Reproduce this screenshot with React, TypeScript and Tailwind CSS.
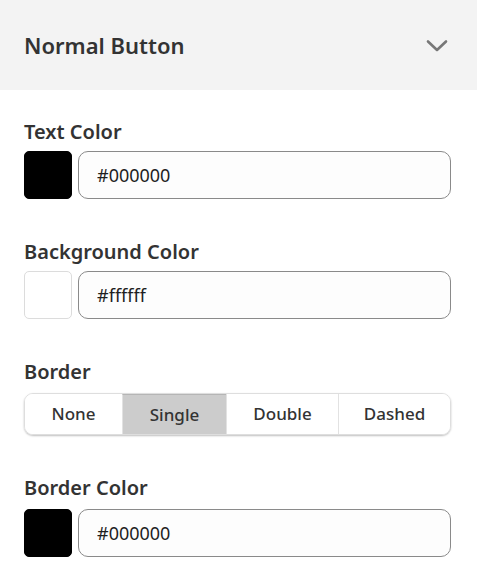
import { useState } from 'react';

const font = { fontFamily: '"Noto Sans", "Open Sans", sans-serif' };

function ColorField({ label, value, swatch, gap = 6 }: { label: string; value: string; swatch: string; gap?: number }) {
  const light = swatch.toLowerCase() === '#ffffff';
  return (
    <div>
      <div className="text-[20px] leading-[26px] font-semibold text-[#333333]">{label}</div>
      <div className={`flex items-center gap-[6px] ${gap === 8 ? 'mt-[8px]' : 'mt-[6px]'}`}>
        <div
          className={`w-[48px] h-[48px] shrink-0 rounded-[5px] border ${light ? 'border-[#dcdcdc]' : 'border-black'}`}
          style={{ backgroundColor: swatch }}
        />
        <input
          readOnly
          value={value}
          className="flex-1 h-[48px] rounded-[10px] border border-[#8a8a8a] bg-[#fdfdfd] pl-[18px] text-[18px] text-[#1f1f1f] outline-none"
          style={font}
        />
      </div>
    </div>
  );
}

export default function App() {
  const [border, setBorder] = useState('Single');
  const options = ['None', 'Single', 'Double', 'Dashed'];

  return (
    <div className="w-[477px] min-h-[574px] bg-white" style={font}>
      {/* 헤더 */}
      <div className="h-[90px] bg-[#f3f3f3] pl-6 pr-[29px] flex items-center justify-between">
        <h2 className="text-[22px] font-semibold text-[#333333]">Normal Button</h2>
        <svg width="22" height="14" viewBox="0 0 22 14" fill="none" className="mt-[1px]">
          <path d="M2 2.5 L11 11 L20 2.5" stroke="#777777" strokeWidth="2.6" strokeLinecap="round" strokeLinejoin="round" />
        </svg>
      </div>

      <div className="pl-6 pr-[26px] pt-[29px] flex flex-col gap-[40px]">
        <ColorField label="Text Color" value="#000000" swatch="#000000" />
        <ColorField label="Background Color" value="#ffffff" swatch="#ffffff" />

        <div>
          <div className="text-[20px] leading-[26px] font-semibold text-[#333333]">Border</div>
          <div className="mt-[8px] h-[42px] grid grid-cols-[97px_104px_112px_1fr] rounded-[9px] border border-[#dedede] shadow-[0_1px_2px_rgba(0,0,0,0.25)] overflow-hidden">
            {options.map((opt, i) => (
              <button
                key={opt}
                onClick={() => setBorder(opt)}
                className={`text-[17px] font-medium text-[#333333] ${i > 0 ? 'border-l border-[#e2e2e2]' : ''} ${
                  border === opt ? 'bg-[#cccccc] border-t border-t-[#b5b5b5]' : 'bg-white'
                }`}
              >
                {opt}
              </button>
            ))}
          </div>
        </div>

        <ColorField label="Border Color" value="#000000" swatch="#000000" gap={8} />
      </div>
    </div>
  );
}
